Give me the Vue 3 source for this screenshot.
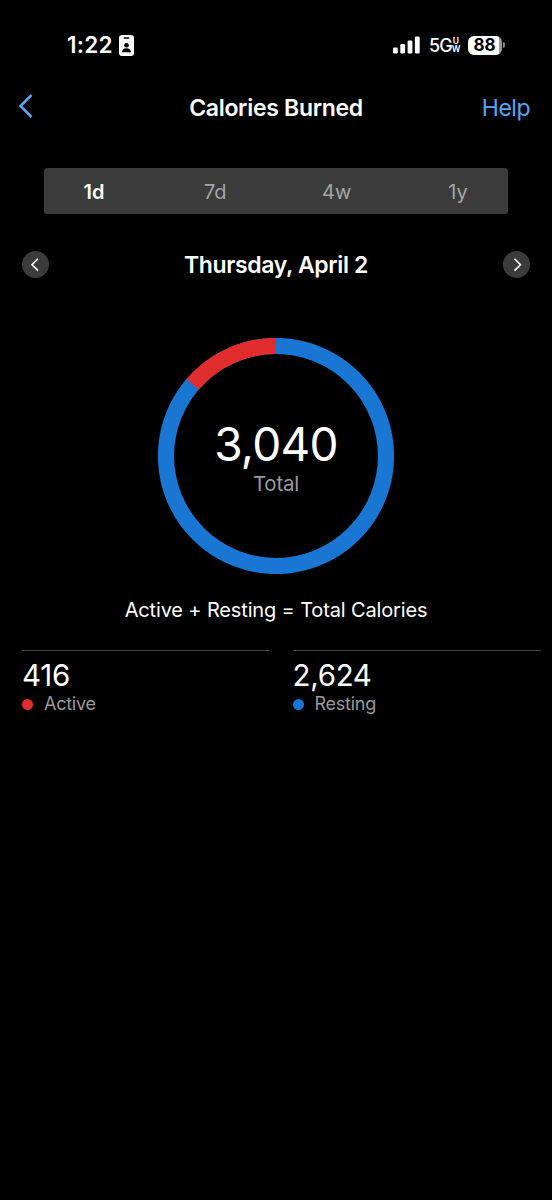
<script setup>
  import { ref, computed } from "vue";

  const ranges = ['1d', '7d', '4w', '1y']
  const selected = ref('1d')

  const active = ref(416)
  const resting = ref(2624)
  const total = computed(() => active.value + resting.value)

  // Ring geometry
  const radius = 110
  const circumference = 2 * Math.PI * radius
  const activeDash = computed(() => {
    const length = circumference * active.value / total.value
    return `${length} ${circumference - length}`
  })

  function format(value) {
    return value.toLocaleString('en-US')
  }
</script>

<template>
  <main class="screen">
    <div class="status">
      <div class="status__left">
        <span class="time">1:22</span>
        <svg class="badge" width="15" height="21" viewBox="0 0 15 21">
          <rect width="15" height="21" rx="3" fill="#fff" />
          <rect x="4.5" y="2.2" width="6" height="1.6" rx="0.8" fill="#000" />
          <circle cx="7.5" cy="10.2" r="2.3" fill="#000" />
          <path d="M3 17.2c0-2.8 2-4 4.5-4s4.5 1.2 4.5 4z" fill="#000" />
        </svg>
      </div>
      <div class="status__right">
        <svg class="signal" width="27" height="18" viewBox="0 0 27 18">
          <rect x="0" y="11.5" width="4.8" height="6" rx="1.3" fill="#fff" />
          <rect x="7.3" y="8" width="4.8" height="9.5" rx="1.3" fill="#fff" />
          <rect x="14.6" y="4.5" width="4.8" height="13" rx="1.3" fill="#fff" />
          <rect x="21.9" y="0.5" width="4.8" height="17" rx="1.3" fill="#fff" />
        </svg>
        <span class="network">5G</span>
        <span class="uw"><span>U</span><span>W</span></span>
        <span class="battery">88</span>
        <span class="nub"></span>
      </div>
    </div>

    <header class="header">
      <svg class="back" width="16" height="26" viewBox="0 0 16 26">
        <path d="M13.5 2 2.5 13l11 11" fill="none" stroke="#55a6f8" stroke-width="2.5" />
      </svg>
      <h1>Calories Burned</h1>
      <a class="help">Help</a>
    </header>

    <nav class="ranges">
      <button v-for="range in ranges" :key="range" :class="{ selected: range === selected }" @click="selected = range">{{ range }}</button>
    </nav>

    <div class="date">
      <button class="round">
        <svg width="27" height="27" viewBox="0 0 27 27">
          <path d="M16 7.8 10 13.7l6 5.9" fill="none" stroke="#fff" stroke-width="1.6" />
        </svg>
      </button>
      <h2>Thursday, April 2</h2>
      <button class="round">
        <svg width="27" height="27" viewBox="0 0 27 27">
          <path d="m11.5 7.8 6 5.9-6 5.9" fill="none" stroke="#fff" stroke-width="1.6" />
        </svg>
      </button>
    </div>

    <div class="chart">
      <svg width="236" height="236" viewBox="0 0 236 236">
        <circle cx="118" cy="118" :r="radius" fill="none" stroke="#1976d2" stroke-width="16.2" />
        <!-- Mirrored so the active part grows counterclockwise from the top -->
        <circle cx="118" cy="118" :r="radius" fill="none" stroke="#e22d2e" stroke-width="16.2" :stroke-dasharray="activeDash" transform="matrix(0 -1 -1 0 236 236)" />
      </svg>
      <div class="chart__label">
        <span class="total">{{ format(total) }}</span>
        <span class="caption">Total</span>
      </div>
    </div>

    <p class="equation">Active + Resting = Total Calories</p>

    <div class="stats">
      <div class="stat">
        <span class="stat__value">{{ format(active) }}</span>
        <span class="stat__name"><i class="dot red"></i>Active</span>
      </div>
      <div class="stat">
        <span class="stat__value">{{ format(resting) }}</span>
        <span class="stat__name"><i class="dot blue"></i>Resting</span>
      </div>
    </div>
  </main>
</template>

<style>
  body {
    background: #000;
  }
</style>

<style scoped>
  .screen {
    box-sizing: border-box;
    width: 552px;
    height: 1200px;
    background: #000;
    color: #fff;
    font-family: Inter, "Liberation Sans", sans-serif;
    overflow: hidden;
  }
  h1, h2, p {
    margin: 0;
  }
  button {
    padding: 0;
    border: 0;
    font-family: inherit;
  }
  .status {
    display: flex;
    justify-content: space-between;
    align-items: center;
    height: 90px;
    padding: 0 47px 0 67px;
  }
  .status__left, .status__right {
    display: flex;
    align-items: center;
  }
  .time {
    width: 52px;
    padding-bottom: 2px;
    font-size: 22.5px;
    font-weight: 600;
    letter-spacing: 0.3px;
  }
  .signal {
    width: 27px;
    margin-right: 9px;
  }
  .network {
    width: 23px;
    font-size: 18px;
    font-weight: 500;
    letter-spacing: -1px;
  }
  .uw {
    display: flex;
    flex-direction: column;
    align-items: center;
    width: 8px;
    margin-right: 8px;
    font-size: 8.5px;
    font-weight: 600;
    line-height: 8px;
  }
  .uw span {
    height: 8px;
  }
  .battery {
    box-sizing: border-box;
    width: 34px;
    height: 19px;
    padding-right: 1px;
    border-radius: 6px;
    background: linear-gradient(90deg, #fff 31px, #999 31px);
    color: #000;
    font-size: 17px;
    font-weight: 700;
    line-height: 19px;
    text-align: center;
  }
  .nub {
    width: 2px;
    height: 6px;
    margin-left: 1px;
    border-radius: 0 2px 2px 0;
    background: #888;
  }
  .header {
    display: grid;
    grid-template-columns: 80px 1fr 76px;
    align-items: center;
    height: 36px;
    padding: 0 22px 0 18px;
  }
  .back {
    margin-top: -5px;
  }
  h1, h2 {
    font-size: 23px;
    font-weight: 600;
    text-align: center;
    white-space: nowrap;
  }
  h1 {
    letter-spacing: -0.3px;
  }
  h2 {
    padding-top: 1px;
    letter-spacing: -0.35px;
  }
  .help {
    color: #55a6f8;
    font-size: 23px;
    letter-spacing: -0.5px;
    text-align: right;
  }
  .ranges {
    display: flex;
    justify-content: space-between;
    height: 46px;
    margin: 42px 44px 0;
    border-radius: 3px;
    background: #3b3b3b;
  }
  .ranges button {
    width: 100px;
    padding-top: 2px;
    background: none;
    color: #a5a5a5;
    font-size: 20px;
  }
  .ranges .selected {
    color: #fff;
    font-weight: 600;
  }
  .date {
    display: flex;
    justify-content: space-between;
    align-items: center;
    height: 28px;
    margin: 36px 22px 0;
  }
  .round {
    width: 27px;
    height: 27px;
    border-radius: 50%;
    background: #3b3b3b;
  }
  .round svg {
    display: block;
  }
  .chart {
    display: grid;
    justify-content: center;
    margin-top: 60px;
  }
  .chart > * {
    grid-area: 1 / 1;
  }
  .chart__label {
    display: flex;
    flex-direction: column;
    align-items: center;
    padding-top: 80px;
  }
  .total {
    font-size: 46px;
    font-weight: 400;
    letter-spacing: -0.7px;
    line-height: 52px;
  }
  .caption {
    color: #999;
    font-size: 20.5px;
    letter-spacing: -0.2px;
    line-height: 28px;
  }
  .equation {
    margin-top: 22px;
    font-size: 20px;
    letter-spacing: -0.15px;
    line-height: 28px;
    text-align: center;
    white-space: nowrap;
  }
  .stats {
    display: grid;
    grid-template-columns: 248px 248px;
    gap: 22.5px;
    margin: 26px 0 0 22px;
  }
  .stat {
    display: flex;
    flex-direction: column;
    border-top: 1px solid #444;
  }
  .stat__value {
    margin-top: 6px;
    font-size: 29.5px;
    letter-spacing: -0.3px;
    line-height: 36px;
  }
  .stat__name {
    display: flex;
    align-items: center;
    gap: 11px;
    color: #999;
    font-size: 18px;
    letter-spacing: -0.25px;
    line-height: 22px;
  }
  .dot {
    width: 11px;
    height: 11px;
    border-radius: 50%;
  }
  .red {
    background: #e22d2e;
  }
  .blue {
    background: #1976d2;
  }
</style>
